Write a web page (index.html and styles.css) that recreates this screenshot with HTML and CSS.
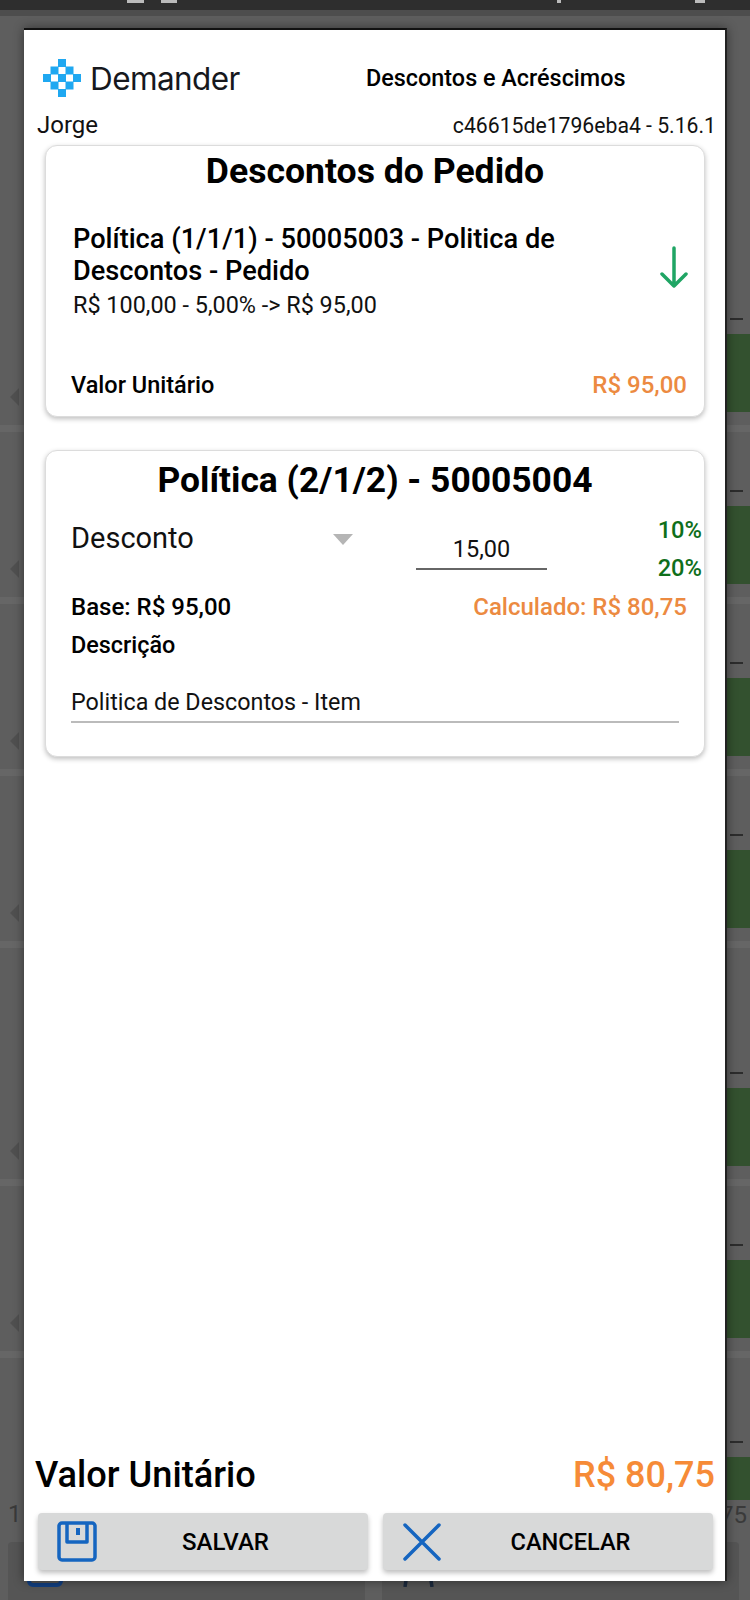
FILE: index.html
```html
<!DOCTYPE html>
<html lang="pt-BR">
<head>
    <meta charset="UTF-8">
    <meta name="viewport" content="width=device-width, initial-scale=1.0">
    <title>Descontos e Acréscimos</title>
    <link rel="stylesheet" href="styles.css">
</head>
<body>
    <!-- Dimmed screen behind the dialog -->
    <div class="backdrop">
        <div class="status-bar">
            <span class="status-dot status-a"></span>
            <span class="status-dot status-b"></span>
            <span class="status-dot status-c"></span>
            <span class="status-dot status-d"></span>
        </div>
        <div class="row row-first"><span class="chevron"></span><div class="row-side"><span class="row-dash"></span><span class="row-green"></span></div></div>
        <div class="row"><span class="chevron"></span><div class="row-side"><span class="row-dash"></span><span class="row-green"></span></div></div>
        <div class="row"><span class="chevron"></span><div class="row-side"><span class="row-dash"></span><span class="row-green"></span></div></div>
        <div class="row"><span class="chevron"></span><div class="row-side"><span class="row-dash"></span><span class="row-green"></span></div></div>
        <div class="row row-tall"><span class="chevron"></span><div class="row-side"><span class="row-dash"></span><span class="row-green"></span></div></div>
        <div class="row"><span class="chevron"></span><div class="row-side"><span class="row-dash"></span><span class="row-green"></span></div></div>
        <div class="row row-last">
            <span class="row-num">1</span>
            <div class="row-side"><span class="row-dash"></span><span class="row-green row-green-short"></span><span class="row-num row-num-right">75</span></div>
        </div>
        <div class="under-actions">
            <div class="under-btn">
                <svg class="under-save" width="36" height="40" viewBox="0 0 36 40" fill="none" stroke="#123f80" stroke-width="4">
                    <rect x="2" y="2" width="32" height="36" rx="4"/>
                </svg>
            </div>
            <div class="under-btn">
                <svg class="under-x" width="38" height="40" viewBox="0 0 38 40" fill="none" stroke="#1d2a3d" stroke-width="3.5">
                    <path d="M6 40L12 0M33 40L27 0"/>
                </svg>
            </div>
        </div>
    </div>

    <div class="dialog">
        <div class="dialog-header">
            <div class="logo">
                <svg class="logo-mark" width="38" height="38" viewBox="0 0 38 38" fill="#1fa8f1">
                    <rect x="15" y="0" width="8" height="8"/>
                    <rect x="7.5" y="7.5" width="8" height="8"/>
                    <rect x="22.5" y="7.5" width="8" height="8"/>
                    <rect x="0" y="15" width="8" height="8"/>
                    <rect x="15" y="15" width="8" height="8"/>
                    <rect x="30" y="15" width="8" height="8"/>
                    <rect x="7.5" y="22.5" width="8" height="8"/>
                    <rect x="22.5" y="22.5" width="8" height="8"/>
                    <rect x="15" y="30" width="8" height="8"/>
                </svg>
                <span class="logo-name">Demander</span>
            </div>
            <div class="dialog-title">Descontos e Acréscimos</div>
        </div>
        <div class="user-line">
            <span class="user-name">Jorge</span>
            <span>c46615de1796eba4 - 5.16.1</span>
        </div>

        <!-- Order discounts -->
        <div class="card card-order">
            <h2 class="card-title">Descontos do Pedido</h2>
            <div class="policy">
                <div class="policy-text">
                    <div class="policy-name">Política (1/1/1) - 50005003 - Politica de Descontos - Pedido</div>
                    <div class="policy-calc">R$ 100,00 - 5,00% -&gt; R$ 95,00</div>
                </div>
                <svg class="arrow" width="30" height="42" viewBox="0 0 30 42" fill="none" stroke="#1fa564" stroke-width="3.5" stroke-linecap="round" stroke-linejoin="round">
                    <path d="M15 2V40M3 28L15 40L27 28"/>
                </svg>
            </div>
            <div class="value-line">
                <span>Valor Unitário</span>
                <span class="orange">R$ 95,00</span>
            </div>
        </div>

        <!-- Item policy -->
        <div class="card card-item">
            <h2 class="card-title card-title-tall">Política (2/1/2) - 50005004</h2>
            <div class="controls">
                <div class="select">
                    <span>Desconto</span>
                    <span class="select-arrow"></span>
                </div>
                <div class="number-input">15,00</div>
                <div class="limits">
                    <span>10%</span>
                    <span>20%</span>
                </div>
            </div>
            <div class="value-line value-base">
                <span>Base: R$ 95,00</span>
                <span class="orange">Calculado: R$ 80,75</span>
            </div>
            <div class="desc-label">Descrição</div>
            <div class="desc-input">Politica de Descontos - Item</div>
        </div>

        <div class="total-line">
            <span>Valor Unitário</span>
            <span class="total-value">R$ 80,75</span>
        </div>

        <div class="actions">
            <div class="btn">
                <svg class="btn-icon" width="40" height="41" viewBox="0 0 40 41" fill="none" stroke="#1565c0" stroke-width="3.5" stroke-linejoin="round">
                    <rect x="2" y="2" width="36" height="37" rx="3"/>
                    <path d="M10 2V21H30V2"/>
                    <path d="M21 7V14" stroke-width="4"/>
                </svg>
                <span class="btn-label">SALVAR</span>
            </div>
            <div class="btn">
                <svg class="btn-icon" width="40" height="40" viewBox="0 0 40 40" fill="none" stroke="#1565c0" stroke-width="3.5" stroke-linecap="round">
                    <path d="M3 3L37 37M37 3L3 37"/>
                </svg>
                <span class="btn-label btn-label-cancel">CANCELAR</span>
            </div>
        </div>
    </div>
</body>
</html>
```

FILE: styles.css
```css
html, body {
    margin: 0;
    padding: 0;
}

body {
    width: 750px;
    height: 1600px;
    position: relative;
    overflow: hidden;
    background-color: #5e5e5e;
    font-family: Roboto, sans-serif;
    color: #111;
}

/* Screen behind the dialog */
.status-bar {
    height: 10px;
    position: relative;
    background-color: #2e2e2e;
    border-bottom: 6px solid #4d4d4d;
}

.status-dot {
    position: absolute;
    top: 0;
    height: 3px;
    background-color: #bbb;
}

.status-a { left: 127px; width: 17px; }
.status-b { left: 161px; width: 16px; }
.status-c { left: 557px; width: 4px; }
.status-d { left: 695px; width: 10px; }

.row {
    height: 172px;
    display: flex;
    justify-content: space-between;
    align-items: flex-end;
    box-sizing: border-box;
    border-bottom: 7px solid #666;
}

.row-first {
    height: 416px;
}

.row-tall {
    height: 238px;
}

.row-last {
    height: 184px;
    border-bottom: none;
}

.row-side {
    display: flex;
    flex-direction: column;
    align-items: flex-end;
}

.row-dash {
    width: 13px;
    height: 2px;
    margin: 0 7px 14px 0;
    background-color: #2c2c2c;
}

.row-green {
    display: block;
    width: 23px;
    height: 78px;
    margin-bottom: 13px;
    background-color: #33512f;
}

.row-green-short {
    height: 43px;
    margin-bottom: 1px;
}

.chevron {
    width: 0;
    height: 0;
    margin: 0 0 19px 10px;
    border-top: 9px solid transparent;
    border-bottom: 9px solid transparent;
    border-right: 9px solid #505050;
}

.row-num {
    margin: 0 0 14px 8px;
    font-size: 24px;
    line-height: 28px;
    color: #3a3a3a;
}

.row-num-right {
    margin: 0 3px 13px 0;
    white-space: nowrap;
}

.under-actions {
    display: flex;
    gap: 17px;
    height: 58px;
    padding-left: 8px;
}

.under-btn {
    width: 357px;
    background-color: #555;
    border-radius: 4px 4px 0 0;
}

.under-save {
    display: block;
    margin: 5px 0 0 19px;
}

.under-x {
    display: block;
    margin: 5px 0 0 17px;
}

/* Dialog */
.dialog {
    position: absolute;
    left: 24px;
    top: 28px;
    width: 703px;
    height: 1553px;
    box-sizing: border-box;
    display: flex;
    flex-direction: column;
    background-color: #fff;
    border-top: 2px solid #111;
    border-right: 2px solid #222;
    box-shadow: 0 0 10px rgba(0, 0, 0, 0.45);
}

.dialog-header {
    display: flex;
    align-items: center;
    height: 38px;
    margin-top: 29px;
    padding-left: 19px;
}

.logo {
    display: flex;
    align-items: center;
    width: 323px;
}

.logo-name {
    margin-left: 9px;
    font-family: Inter, sans-serif;
    font-size: 31.5px;
    letter-spacing: -0.6px;
    color: #16181d;
}

.dialog-title {
    font-size: 23.4px;
    font-weight: 500;
    color: #000;
}

.user-line {
    display: flex;
    justify-content: space-between;
    align-items: baseline;
    margin-top: 14px;
    padding: 0 9px 0 13px;
    font-size: 21.2px;
    line-height: 28px;
}

.user-name {
    font-size: 24px;
}

.card {
    margin: 5px 21px 0 21px;
    width: 660px;
    box-sizing: border-box;
    border-radius: 12px;
    background-color: #fff;
    border: 1px solid #dcdcdc;
    box-shadow: 0 2px 5px rgba(0, 0, 0, 0.25);
}

.card-order {
    height: 272px;
}

.card-item {
    height: 307px;
    margin-top: 33px;
}

.card-title {
    margin: 0;
    text-align: center;
    font-size: 35.6px;
    font-weight: 700;
    line-height: 50px;
    color: #000;
}

.card-title-tall {
    font-size: 35.4px;
    line-height: 59px;
}

.policy {
    display: flex;
    align-items: center;
    margin-top: 27px;
    padding: 0 15px 0 27px;
}

.policy-text {
    flex: 1;
}

.policy-name {
    width: 512px;
    font-size: 27.2px;
    font-weight: 500;
    line-height: 32px;
    color: #000;
}

.policy-calc {
    margin-top: 2px;
    font-size: 23.4px;
    line-height: 32px;
}

.arrow {
    margin-top: -10px;
}

.value-line {
    display: flex;
    justify-content: space-between;
    margin-top: 49px;
    padding: 0 17px 0 25px;
    font-size: 23.5px;
    font-weight: 500;
    line-height: 30px;
    color: #000;
}

.orange {
    font-size: 24px;
    color: #ec8a41;
}

.controls {
    display: flex;
    align-items: flex-start;
    height: 75px;
}

.select {
    display: flex;
    justify-content: space-between;
    width: 282px;
    margin: 5px 0 0 25px;
    font-size: 29px;
    line-height: 46px;
}

.select-arrow {
    width: 0;
    height: 0;
    margin-top: 19px;
    border-left: 10px solid transparent;
    border-right: 10px solid transparent;
    border-top: 11px solid #b5b5b5;
}

.number-input {
    width: 131px;
    height: 45px;
    margin: 15px 0 0 63px;
    box-sizing: border-box;
    border-bottom: 2px solid #666;
    text-align: center;
    font-size: 23.5px;
    line-height: 48px;
}

.limits {
    display: flex;
    flex-direction: column;
    align-items: flex-end;
    flex: 1;
    margin-top: 1px;
    padding-right: 2px;
    font-size: 23.7px;
    font-weight: 500;
    line-height: 38px;
    color: #0f6f1b;
}

.value-base {
    margin-top: 7px;
    font-size: 24px;
}

.desc-label {
    margin-top: 8px;
    padding-left: 25px;
    font-size: 23.4px;
    font-weight: 500;
    line-height: 30px;
    color: #000;
}

.desc-input {
    margin: 26px 25px 0 25px;
    height: 37px;
    box-sizing: border-box;
    border-bottom: 2px solid #bbb;
    font-size: 23.3px;
    line-height: 32px;
}

.total-line {
    display: flex;
    justify-content: space-between;
    align-items: center;
    margin-top: auto;
    padding: 0 10px 0 11px;
    font-size: 36.2px;
    font-weight: 500;
    line-height: 46px;
    color: #000;
}

.total-value {
    font-size: 36px;
    color: #f68b37;
}

.actions {
    display: flex;
    gap: 15px;
    margin: 15px 0 11px 14px;
}

.btn {
    width: 330px;
    height: 57px;
    display: flex;
    align-items: center;
    border-radius: 4px;
    background-color: #d8d9d9;
    box-shadow: 0 3px 5px rgba(0, 0, 0, 0.25);
}

.btn-icon {
    flex: none;
    margin-left: 19px;
}

.btn-label {
    flex: 1;
    padding-right: 14px;
    text-align: center;
    font-size: 24px;
    font-weight: 500;
    color: #000;
}

.btn-label-cancel {
    font-size: 23.6px;
}
```
